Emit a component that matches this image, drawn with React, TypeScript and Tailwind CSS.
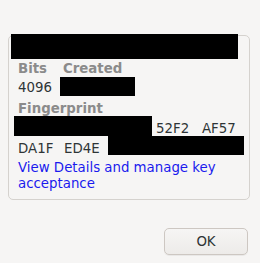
import React from "react";

const font = { fontFamily: '"DejaVu Sans", "Liberation Sans", sans-serif' };

export default function App() {
  return (
    <div
      className="w-[260px] h-[263px] bg-[#f6f5f4] text-[#2e3436] text-[13.33px] leading-[15px] flex flex-col overflow-hidden"
      style={font}
    >
      <div className="mt-[35px] ml-[8px] w-[242px] h-[165px] border border-[#d5d2ce] rounded-[5px] flex flex-col">
        <div className="-mt-[2px] ml-[2px] w-[227px] h-[25px] bg-black shrink-0" />
        <div className="pl-[9px] pt-[1.5px] flex flex-col">
          <div className="grid grid-cols-[auto_auto] justify-start gap-x-[11px] gap-y-[4.5px]">
            <div className="font-bold text-[#8b8b8b]">Bits</div>
            <div className="font-bold text-[#8b8b8b]">Created</div>
            <div>4096</div>
            <div className="relative">
              <div className="absolute -left-[3px] -top-[3px] w-[75px] h-[19px] bg-black" />
              <span className="invisible">2024-01-01</span>
            </div>
          </div>
          <div className="mt-[5.5px] font-bold text-[#8b8b8b]">Fingerprint</div>
          <div className="relative mt-[5px] grid grid-cols-[repeat(5,35px)] gap-x-[11px] gap-y-[5px]">
            <div className="absolute -left-[4px] -top-[5px] w-[138px] h-[20px] bg-black" />
            <div className="absolute left-[90px] top-[15px] w-[136px] h-[19px] bg-black" />
            <div className="invisible">0000</div>
            <div className="invisible">0000</div>
            <div className="invisible">0000</div>
            <div className="relative">52F2</div>
            <div className="relative">AF57</div>
            <div>DA1F</div>
            <div>ED4E</div>
            <div className="invisible">0000</div>
            <div className="invisible">0000</div>
            <div className="invisible">0000</div>
          </div>
          <div className="mt-[4.5px] text-[#1a1aee] leading-[15.5px]">
            View Details and manage key
            <br />
            acceptance
          </div>
        </div>
      </div>
      <div className="flex justify-end pr-[12px] mt-[28px]">
        <button className="w-[84px] h-[27px] rounded-[5px] border border-[#cdc7c2] bg-gradient-to-b from-[#f6f5f4] to-[#edebe9] text-[#2e3436] text-[13.33px] flex items-center justify-center shadow-[0_1px_0_rgba(0,0,0,0.05)]">
          OK
        </button>
      </div>
    </div>
  );
}
